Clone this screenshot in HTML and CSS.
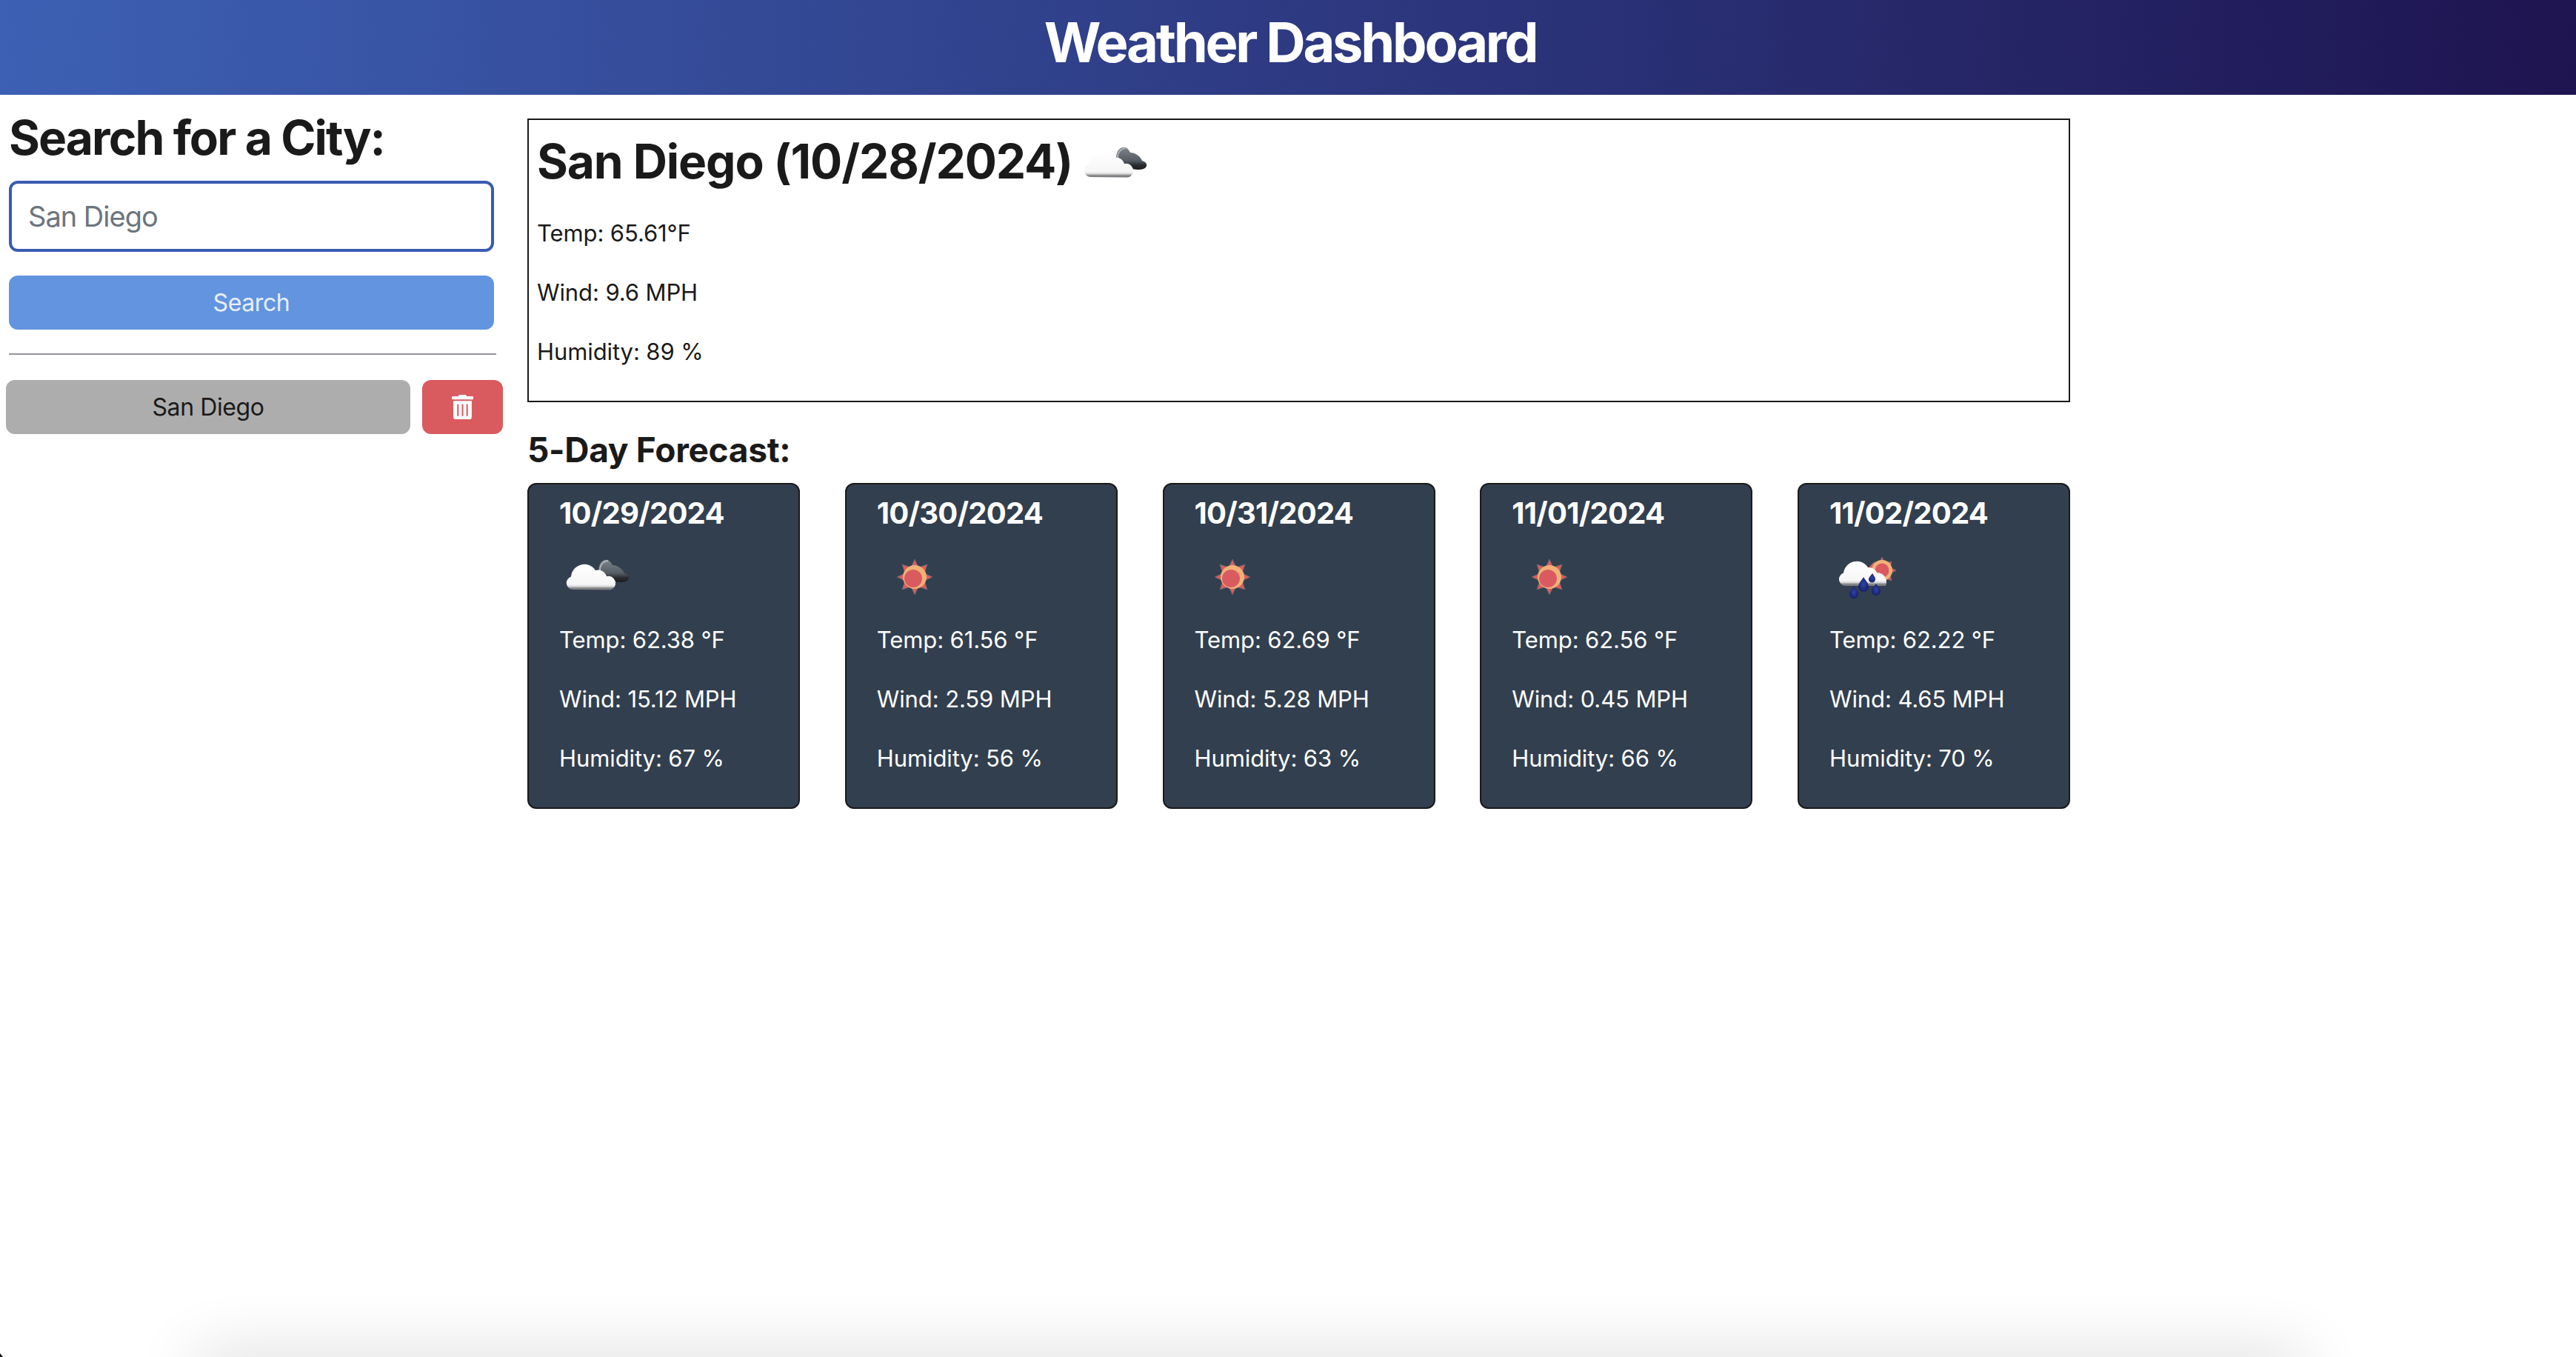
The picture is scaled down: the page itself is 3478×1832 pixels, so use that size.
FILE: index.html
```html
<!DOCTYPE html>
<html lang="en">
<head>
  <meta charset="UTF-8" />
  <meta name="viewport" content="width=device-width, initial-scale=1.0"/>
  <title>Weather Dashboard</title>
  <link rel="stylesheet" href="styles.css">
</head>
<body>

  <svg class="icon-defs" width="0" height="0" aria-hidden="true">
    <defs>
      <linearGradient id="cloudWhite" x1="0" y1="0" x2="0" y2="1">
        <stop offset="0" stop-color="#ffffff"/>
        <stop offset="0.78" stop-color="#f6f6f6"/>
        <stop offset="0.86" stop-color="#dadada"/>
        <stop offset="0.92" stop-color="#8c8c8c"/>
        <stop offset="1" stop-color="#6f7478"/>
      </linearGradient>
      <linearGradient id="cloudDark" x1="0" y1="0" x2="0" y2="1">
        <stop offset="0" stop-color="#7d858c"/>
        <stop offset="0.6" stop-color="#555c64"/>
        <stop offset="0.8" stop-color="#2a2c30"/>
        <stop offset="1" stop-color="#1c1c1e"/>
      </linearGradient>
      <radialGradient id="dropBlue">
        <stop offset="0" stop-color="#2f45a8"/>
        <stop offset="1" stop-color="#17206f"/>
      </radialGradient>

      <symbol id="cloudy" viewBox="0 0 100 100">
        <path d="M51 42 C51 30 58 26 63 27 C67 28 69 32 70 34 C78 34 84 40 86 45 C90 46 93 49 92 52 C91 56 86 57 80 57 L60 55 Z" fill="url(#cloudDark)"/>
        <path d="M53 41 C53 32 59 28 64 28" fill="none" stroke="#aeb3b7" stroke-width="2"/>
        <path d="M16 67 A9 9 0 0 1 14 49.500 A18 18 0 0 1 47 41 A12 12 0 0 1 62 49 A9.500 9.500 0 0 1 67 67.500 Z" fill="url(#cloudWhite)"/>
      </symbol>

      <symbol id="sunny" viewBox="0 0 100 100">
        <polygon points="49,26 54,37 66,33 62,45 73,50 62,55 66,67 54,63 49,74 44,63 32,67 36,55 25,50 36,45 32,33 44,37" fill="#de5c5e" stroke="#5e6670" stroke-width="1"/>
        <circle cx="49" cy="50" r="16" fill="#f1b176"/>
        <circle cx="47" cy="52" r="12" fill="#d95b5f"/>
      </symbol>

      <symbol id="rainy" viewBox="0 0 100 100">
        <polygon points="69,23 73,31 82,29 80,37 88,41 80,46 82,55 72,52 69,60 58,55 52,36 58,30 65,31" fill="#de5c5e" stroke="#5e6670" stroke-width="1"/>
        <circle cx="69" cy="41" r="14" fill="#f1b176"/>
        <circle cx="69" cy="41" r="9.500" fill="#d95b5f"/>
        <path d="M20 62 A9 9 0 0 1 17 44.500 A18 18 0 0 1 50 37 A12 12 0 0 1 62 44 A13 13 0 0 1 74 62 Z" fill="url(#cloudWhite)"/>
        <path d="M31 62 C33 66 37 69 37 73 A6 6 0 0 1 25 73 C25 69 29 66 31 62 Z" fill="url(#dropBlue)"/>
        <path d="M44 50 C46 54 51 58 51 63 A7 7 0 0 1 37 63 C37 58 42 54 44 50 Z" fill="url(#dropBlue)"/>
        <path d="M61 59 C63 62 67 65 67 69 A6 6 0 0 1 55 69 C55 65 59 62 61 59 Z" fill="url(#dropBlue)"/>
        <path d="M56 45 C57 47 60 50 60 53 A4.500 4.500 0 0 1 51 53 C51 50 55 47 56 45 Z" fill="url(#dropBlue)"/>
      </symbol>
    </defs>
  </svg>

  <header class="page-header">
    <h1>Weather Dashboard</h1>
  </header>

  <div class="page-body">
    <aside class="sidebar">
      <h2 class="search-title">Search for a City:</h2>
      <input class="city-input" type="text" placeholder="San Diego" />
      <button class="search-btn">Search</button>
      <hr class="divider" />
      <div class="history-row">
        <button class="history-btn">San Diego</button>
        <button class="delete-btn" aria-label="Delete">
          <svg class="trash" viewBox="0 0 448 512"><path fill="currentColor" d="M32 464a48 48 0 0 0 48 48h288a48 48 0 0 0 48-48V128H32zm272-256a16 16 0 0 1 32 0v224a16 16 0 0 1-32 0zm-96 0a16 16 0 0 1 32 0v224a16 16 0 0 1-32 0zm-96 0a16 16 0 0 1 32 0v224a16 16 0 0 1-32 0zM432 32H312l-9.4-18.7A24 24 0 0 0 281.1 0H166.8a23.72 23.72 0 0 0-21.4 13.3L136 32H16A16 16 0 0 0 0 48v32a16 16 0 0 0 16 16h416a16 16 0 0 0 16-16V48a16 16 0 0 0-16-16z"/></svg>
        </button>
      </div>
    </aside>

    <main class="content">
      <section class="today">
        <h2 class="today-title">San Diego (10/28/2024) <svg class="today-icon"><use href="#cloudy"/></svg></h2>
        <p>Temp: 65.61°F</p>
        <p>Wind: 9.6 MPH</p>
        <p>Humidity: 89 %</p>
      </section>

      <h3 class="forecast-title">5-Day Forecast:</h3>
      <div class="forecast">
        <div class="card">
          <h4>10/29/2024</h4>
          <svg class="card-icon"><use href="#cloudy"/></svg>
          <p>Temp: 62.38 °F</p>
          <p>Wind: 15.12 MPH</p>
          <p>Humidity: 67 %</p>
        </div>
        <div class="card">
          <h4>10/30/2024</h4>
          <svg class="card-icon"><use href="#sunny"/></svg>
          <p>Temp: 61.56 °F</p>
          <p>Wind: 2.59 MPH</p>
          <p>Humidity: 56 %</p>
        </div>
        <div class="card">
          <h4>10/31/2024</h4>
          <svg class="card-icon"><use href="#sunny"/></svg>
          <p>Temp: 62.69 °F</p>
          <p>Wind: 5.28 MPH</p>
          <p>Humidity: 63 %</p>
        </div>
        <div class="card">
          <h4>11/01/2024</h4>
          <svg class="card-icon"><use href="#sunny"/></svg>
          <p>Temp: 62.56 °F</p>
          <p>Wind: 0.45 MPH</p>
          <p>Humidity: 66 %</p>
        </div>
        <div class="card">
          <h4>11/02/2024</h4>
          <svg class="card-icon"><use href="#rainy"/></svg>
          <p>Temp: 62.22 °F</p>
          <p>Wind: 4.65 MPH</p>
          <p>Humidity: 70 %</p>
        </div>
      </div>
    </main>
  </div>

  <div class="bottom-shadow"></div>
  <div class="corner-mark"></div>

</body>
</html>
```

FILE: styles.css
```css
* {
  box-sizing: border-box;
}

html, body {
  height: 100%;
}

body {
  font-family: Inter, "Liberation Sans", sans-serif;
  font-size: 32px;
  line-height: 48px;
  color: #1a1a1a;
  background: white;
  margin: 0;
  position: relative;
  overflow: hidden;
}

.icon-defs {
  position: absolute;
}

.page-header {
  height: 128px;
  padding: 0 0 14px 6px;
  background: linear-gradient(to right, #3d60b4, #1e1450);
  display: flex;
  justify-content: center;
  align-items: center;
}

h1 {
  margin: 0;
  color: white;
  font-size: 74px;
  line-height: 1.2;
  font-weight: 700;
  letter-spacing: -3.3px;
}

.page-body {
  display: flex;
  align-items: flex-start;
}

/* left column */
.sidebar {
  width: 712px;
  flex-shrink: 0;
  padding: 0 33px 0 12px;
  display: flex;
  flex-direction: column;
}

.search-title {
  margin: 22px 0 22px;
  font-size: 64px;
  line-height: 72px;
  font-weight: 700;
  letter-spacing: -1.9px;
}

.city-input {
  width: 655px;
  height: 96px;
  border: 4px solid #3a5cb0;
  border-radius: 12px;
  padding: 0 22px;
  font-family: inherit;
  font-size: 38px;
  letter-spacing: -1px;
  outline: none;
}

.city-input::placeholder {
  color: #6c757d;
  opacity: 1;
}

.search-btn {
  width: 655px;
  height: 73px;
  margin-top: 32px;
  border: none;
  border-radius: 12px;
  background: #6294e0;
  color: #e8eef8;
  font-family: inherit;
  font-size: 32px;
  letter-spacing: -0.4px;
}

.divider {
  width: 658px;
  margin: 32px 0 34px;
  border: none;
  border-top: 2px solid #92969b;
}

.history-row {
  display: flex;
  gap: 16px;
  margin-left: -4px;
}

.history-btn {
  width: 546px;
  height: 73px;
  border: none;
  border-radius: 12px;
  background: #adadad;
  color: #1a1a1a;
  font-family: inherit;
  font-size: 32px;
  letter-spacing: -0.4px;
}

.delete-btn {
  width: 109px;
  height: 73px;
  border: none;
  border-radius: 12px;
  background: #d95b5f;
  color: white;
  display: flex;
  justify-content: center;
  align-items: center;
  padding: 0;
}

.trash {
  width: 29px;
  height: 33px;
}

/* right column */
.content {
  width: 2083px;
  padding-top: 32px;
}

.today {
  height: 383px;
  border: 2px solid #1a1a1a;
  padding: 18px 11px 0;
}

.today-title {
  margin: 0 0 35px;
  height: 76px;
  display: flex;
  align-items: center;
  gap: 8px;
  font-size: 64px;
  line-height: 76px;
  font-weight: 700;
  letter-spacing: -1.1px;
}

.today-icon {
  width: 100px;
  height: 100px;
  margin-top: 8px;
  flex-shrink: 0;
}

.today p {
  margin: 0 0 32px;
  font-size: 31px;
  letter-spacing: -0.1px;
}

.forecast-title {
  margin: 36px 0 17px;
  font-size: 46px;
  line-height: 56px;
  font-weight: 700;
  letter-spacing: -0.3px;
}

.forecast {
  display: flex;
  justify-content: space-between;
}

.card {
  width: 368px;
  height: 440px;
  padding: 15px 41px;
  background: #323f4f;
  border: 2px solid #1a1a1a;
  border-radius: 12px;
  color: white;
}

.card h4 {
  margin: 0;
  font-size: 40px;
  line-height: 48px;
  font-weight: 700;
  letter-spacing: -0.75px;
}

.card-icon {
  display: block;
  width: 100px;
  height: 100px;
  margin: 12px 0 11px;
  transform: translateX(2px);
}

.card p {
  margin: 0 0 32px;
  font-size: 31px;
  letter-spacing: -0.1px;
}

/* soft shadow along the bottom edge of the window */
.bottom-shadow {
  position: absolute;
  left: 265px;
  width: 2845px;
  top: 100%;
  height: 40px;
  box-shadow: 0 0 85px rgba(0, 0, 0, 0.2);
}

.corner-mark {
  position: absolute;
  left: 0;
  bottom: 0;
  width: 4px;
  height: 5px;
  background: #111;
  clip-path: polygon(0 0, 100% 100%, 0 100%);
}
```
